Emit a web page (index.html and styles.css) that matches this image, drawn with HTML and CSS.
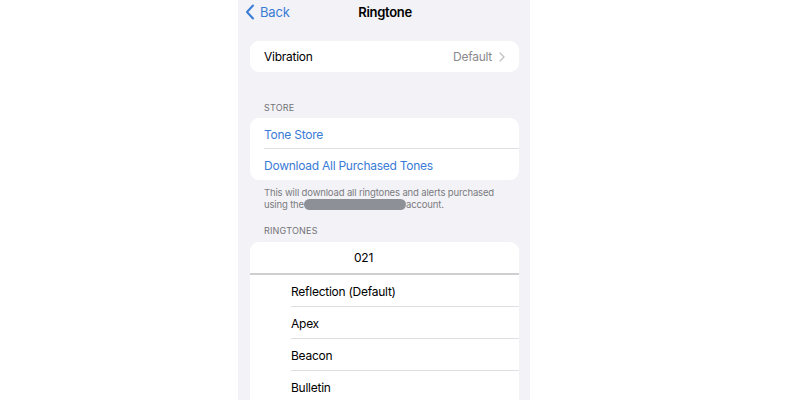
FILE: index.html
```html
<!DOCTYPE html>
<html lang="en">
<head>
<meta charset="utf-8">
<title>Ringtone</title>
<link rel="stylesheet" href="styles.css">
</head>
<body>
<div class="screen">
  <div class="nav">
    <div class="back">
      <svg class="back-chev" width="10" height="16" viewBox="0 0 10 16"><polyline points="8,1.5 2,8 8,14.5" fill="none" stroke="#3a7bd6" stroke-width="2" stroke-linecap="round" stroke-linejoin="round"/></svg>
      <span>Back</span>
    </div>
    <div class="title">Ringtone</div>
  </div>

  <div class="card first">
    <div class="row">
      <span class="label">Vibration</span>
      <span class="detail">Default
        <svg class="chev" width="6" height="10" viewBox="0 0 6 10"><polyline points="1,1 5,5 1,9" fill="none" stroke="#c4c4c7" stroke-width="1.4" stroke-linecap="round" stroke-linejoin="round"/></svg>
      </span>
    </div>
  </div>

  <div class="section-header store-h">STORE</div>
  <div class="card">
    <div class="row link sep">Tone Store</div>
    <div class="row link">Download All Purchased Tones</div>
  </div>
  <div class="footer">This will download all ringtones and alerts purchased<br>using the<span class="redact"></span>account.</div>

  <div class="section-header ring-h">RINGTONES</div>
  <div class="card tones">
    <div class="picked">021</div>
    <div class="tone sep"><span>Reflection (Default)</span></div>
    <div class="tone sep"><span>Apex</span></div>
    <div class="tone sep"><span>Beacon</span></div>
    <div class="tone"><span>Bulletin</span></div>
  </div>
</div>
</body>
</html>
```
FILE: styles.css
```css
* { box-sizing: border-box; }
html, body { margin: 0; padding: 0; background: #ffffff; }
body {
  font-family: Inter, "Liberation Sans", sans-serif;
  color: #000;
}
.screen {
  width: 292px;
  height: 400px;
  margin-left: 238px;
  background: #f2f2f7;
  overflow: hidden;
}
.nav {
  position: relative;
  height: 24px;
  display: flex;
  align-items: center;
  justify-content: center;
}
.back {
  position: absolute;
  left: 7px;
  top: 4px;
  display: flex;
  align-items: center;
  gap: 5px;
  color: #3a7bd6;
  font-size: 13px;
  letter-spacing: -0.2px;
  height: 16px;
}
.title {
  font-weight: 600;
  font-size: 13px;
  letter-spacing: -0.3px;
  padding-left: 2px;
}
.card {
  margin: 0 11px 0 12px;
  background: #fff;
  border-radius: 9px;
  overflow: hidden;
}
.card.first { margin-top: 17px; }
.row {
  height: 31px;
  display: flex;
  align-items: center;
  justify-content: space-between;
  padding: 0 14px;
  font-size: 12px;
  letter-spacing: -0.25px;
  position: relative;
}
.row.sep::after, .tone.sep::after {
  content: "";
  position: absolute;
  right: 0;
  bottom: 0;
  height: 1px;
  background: #e0e0e3;
}
.row.sep::after { left: 14px; }
.link { color: #3a7bd6; padding-top: 1px; }
.detail {
  color: #8a8a8e;
  display: flex;
  align-items: center;
  gap: 7px;
}
.section-header {
  font-size: 9px;
  color: #737378;
  padding-left: 26px;
  line-height: 12px;
  letter-spacing: 0.2px;
}
.store-h { margin-top: 30px; margin-bottom: 4px; }
.ring-h { margin-top: 14px; margin-bottom: 5px; }
.footer {
  font-size: 9.5px;
  line-height: 12px;
  color: #7b7b80;
  padding-left: 26px;
  margin-top: 7px;
  letter-spacing: -0.15px;
}
.redact {
  display: inline-block;
  width: 102px;
  height: 11px;
  border-radius: 6px;
  background: #8d9096;
  vertical-align: -2px;
}
.tones { height: 200px; }
.picked {
  height: 33px;
  padding-left: 104px;
  display: flex;
  align-items: center;
  font-size: 12px;
  letter-spacing: -0.2px;
  border-bottom: 2px solid #cfcfd2;
}
.tone {
  height: 32px;
  display: flex;
  align-items: center;
  padding-left: 41px;
  font-size: 12px;
  letter-spacing: -0.25px;
  position: relative;
}
.tone.sep::after { left: 41px; }
```
